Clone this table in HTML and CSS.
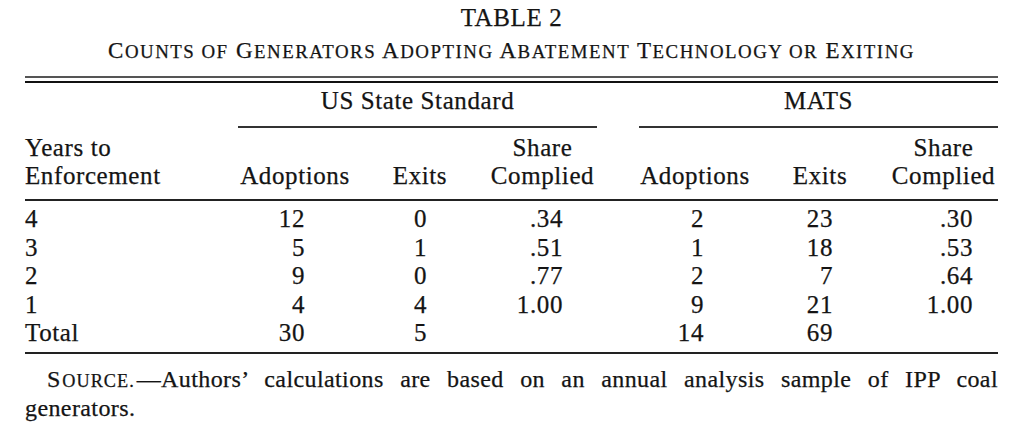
FILE: index.html
```html
<!DOCTYPE html>
<html lang="en">
<head>
<meta charset="utf-8">
<title>Table 2</title>
<link rel="stylesheet" href="styles.css">
</head>
<body>
<div class="page">
  <div class="caption">
    <div class="title">TABLE 2</div>
    <div class="subtitle">C<small>OUNTS OF</small> G<small>ENERATORS</small> A<small>DOPTING</small> A<small>BATEMENT</small> T<small>ECHNOLOGY OR</small> E<small>XITING</small></div>
  </div>
  <div class="double-rule">
    <div class="rule-thin"></div>
    <div class="rule-thick"></div>
  </div>
  <table class="data">
    <colgroup>
      <col class="c-label">
      <col class="c-adopt">
      <col class="c-exit">
      <col class="c-share">
      <col class="c-gap">
      <col class="c-adopt2">
      <col class="c-exit2">
      <col class="c-share2">
    </colgroup>
    <thead>
      <tr class="spanner-row">
        <th></th>
        <th colspan="3" class="spanner">US State Standard</th>
        <th></th>
        <th colspan="3" class="spanner">MATS</th>
      </tr>
      <tr class="head-row">
        <th class="label-head">Years to<br>Enforcement</th>
        <th>Adoptions</th>
        <th>Exits</th>
        <th>Share<br>Complied</th>
        <th></th>
        <th>Adoptions</th>
        <th>Exits</th>
        <th>Share<br>Complied</th>
      </tr>
    </thead>
    <tbody>
      <tr class="first">
        <td class="label">4</td>
        <td class="n-adopt">12</td>
        <td class="n-exit">0</td>
        <td class="n-share">.34</td>
        <td></td>
        <td class="n-adopt2">2</td>
        <td class="n-exit2">23</td>
        <td class="n-share2">.30</td>
      </tr>
      <tr>
        <td class="label">3</td>
        <td class="n-adopt">5</td>
        <td class="n-exit">1</td>
        <td class="n-share">.51</td>
        <td></td>
        <td class="n-adopt2">1</td>
        <td class="n-exit2">18</td>
        <td class="n-share2">.53</td>
      </tr>
      <tr>
        <td class="label">2</td>
        <td class="n-adopt">9</td>
        <td class="n-exit">0</td>
        <td class="n-share">.77</td>
        <td></td>
        <td class="n-adopt2">2</td>
        <td class="n-exit2">7</td>
        <td class="n-share2">.64</td>
      </tr>
      <tr>
        <td class="label">1</td>
        <td class="n-adopt">4</td>
        <td class="n-exit">4</td>
        <td class="n-share">1.00</td>
        <td></td>
        <td class="n-adopt2">9</td>
        <td class="n-exit2">21</td>
        <td class="n-share2">1.00</td>
      </tr>
      <tr class="last">
        <td class="label">Total</td>
        <td class="n-adopt">30</td>
        <td class="n-exit">5</td>
        <td class="n-share"></td>
        <td></td>
        <td class="n-adopt2">14</td>
        <td class="n-exit2">69</td>
        <td class="n-share2"></td>
      </tr>
    </tbody>
  </table>
  <p class="note"><span class="note-label">S<small>OURCE.</small></span>—Authors’ calculations are based on an annual analysis sample of IPP coal generators.</p>
</div>
</body>
</html>
```

FILE: styles.css
```css
html, body {
  margin: 0;
  padding: 0;
  background: #ffffff;
}

body {
  font-family: "Liberation Serif", "Times New Roman", serif;
  color: #141414;
  -webkit-text-stroke: 0.25px #141414;
}

.page {
  width: 973px;
  padding: 3px 0 0 25px;
}

.caption {
  text-align: center;
}

.title {
  font-size: 25px;
  line-height: 30px;
  letter-spacing: 0.6px;
}

.subtitle {
  margin-top: 3px;
  font-size: 23px;
  line-height: 30px;
  letter-spacing: 1.5px;
}

.subtitle small {
  font-size: 82%;
}

.double-rule {
  margin-top: 9px;
  display: flex;
  flex-direction: column;
  gap: 3px;
}

.rule-thin {
  height: 2px;
  background: #555555;
}

.rule-thick {
  height: 2px;
  background: #111111;
}

.data {
  width: 973px;
  border-collapse: collapse;
  table-layout: fixed;
  font-size: 25px;
  line-height: 28px;
  letter-spacing: 0.6px;
}

.c-label { width: 213px; }
.c-adopt { width: 114px; }
.c-exit { width: 136px; }
.c-share { width: 109px; }
.c-gap { width: 42px; }
.c-adopt2 { width: 112px; }
.c-exit2 { width: 138px; }
.c-share2 { width: 109px; }

th, td {
  padding: 0;
  font-weight: normal;
}

.spanner-row th {
  padding: 4px 0 11px;
}

.spanner {
  text-align: center;
  border-bottom: 2px solid #333333;
}

.head-row th {
  padding: 6px 0 9px;
  text-align: center;
  vertical-align: bottom;
  border-bottom: 2px solid #222222;
}

.head-row th.label-head {
  text-align: left;
}

tbody td {
  text-align: right;
  white-space: nowrap;
  line-height: 28.5px;
}

tbody tr.first td {
  padding-top: 4px;
}

tbody tr.last td {
  padding-bottom: 4px;
  border-bottom: 2px solid #222222;
}

tbody td.label {
  text-align: left;
}

.n-adopt { padding-right: 47px; }
.n-exit { padding-right: 61px; }
.n-share { padding-right: 34px; }
.n-adopt2 { padding-right: 47px; }
.n-exit2 { padding-right: 56px; }
.n-share2 { padding-right: 25px; }

.note {
  margin: 12px 0 0;
  font-size: 24px;
  line-height: 27px;
  letter-spacing: 0.4px;
  word-spacing: 3px;
  text-align: justify;
  text-indent: 22px;
}

.note-label {
  letter-spacing: 1px;
  margin-right: 2px;
}

.note-label small {
  font-size: 76%;
  margin-left: 1px;
}
```
